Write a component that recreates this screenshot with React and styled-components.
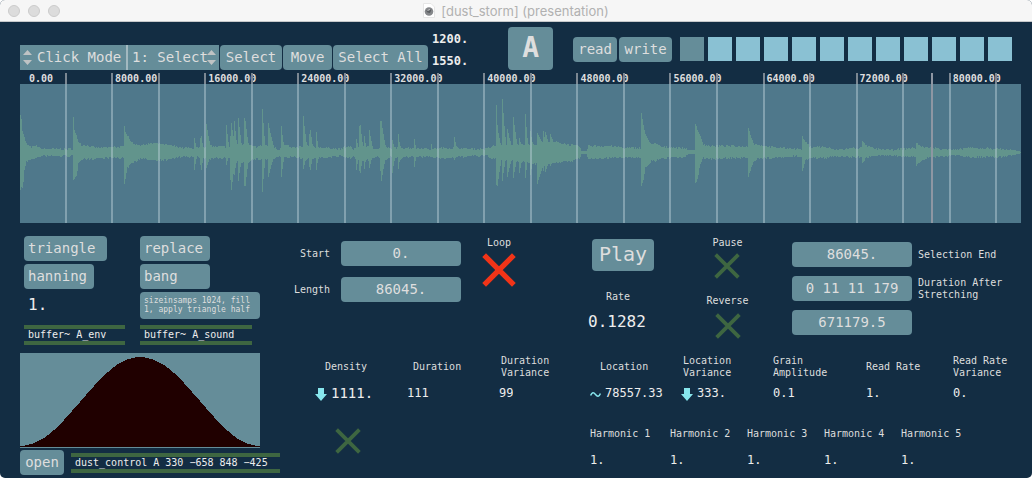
import React from "react";
import styled, { createGlobalStyle } from "styled-components";

const c = {
  bg: "#132d43",
  button: "#658d99",
  pane: "#4f788b",
  wave: "#62948c",
  slot: "#8ac1d3",
  text: "#dedede",
  bright: "#eeeeee",
  green: "#3e6641",
  red: "#f13418",
  cyan: "#87e6ed",
  curve: "#200000",
};
const mono = '"DejaVu Sans Mono", "Liberation Mono", monospace';

const Global = createGlobalStyle`
  * { box-sizing: border-box; }
  body { margin: 0; background: #ffffff; }
  button, input, select { margin: 0; padding: 0; border: 0; font-family: ${mono}; }
  svg { display: block; }
`;

const Window = styled.div`
  display: flex;
  flex-direction: column;
  min-height: 100vh;
  border-radius: 5px;
  overflow: hidden;
  background: ${c.bg};
  color: ${c.text};
  font: 10px/12px ${mono};
`;

const TitleBar = styled.header`
  position: relative;
  display: flex;
  align-items: center;
  justify-content: center;
  gap: 6px;
  height: 22px;
  background: #f6f6f6;
  border-bottom: 1px solid #c6c8ca;
  color: #b1b1b1;
  font: 13px/20px Inter, "Liberation Sans", sans-serif;
`;
const Title = styled.h1`
  margin: 0;
  font: inherit;
`;
const Lights = styled.div`
  position: absolute;
  left: 8px;
  top: 5px;
  display: flex;
  gap: 8px;
`;
const Light = styled.button`
  width: 12px;
  height: 12px;
  border-radius: 50%;
  background: #dcdcdc;
  border: 1px solid #cbcbcb;
`;

const Toolbar = styled.div`
  display: flex;
  align-items: flex-end;
  height: 51px;
  padding: 0 20px 3px;
`;
const Tools = styled.div`
  display: flex;
  gap: 1px;
`;
const MenuPair = styled.div`
  display: flex;
`;
const MenuBox = styled.div`
  position: relative;
  display: flex;
  background: ${c.button};
  border-left: ${(p) => (p.$divided ? "2px solid #a3b9c0" : "0")};
`;
const Menu = styled.select`
  appearance: none;
  width: ${(p) => p.$w}px;
  height: 25px;
  padding-left: ${(p) => p.$pad}px;
  padding-bottom: 2px;
  background: transparent;
  color: ${c.text};
  font-size: 14px;
`;
const MenuArrows = styled.svg`
  position: absolute;
  top: 5px;
  ${(p) => p.$side}: 3px;
  pointer-events: none;
`;

const Button = styled.button`
  width: ${(p) => (p.$w ? `${p.$w}px` : "auto")};
  height: ${(p) => p.$h || 25}px;
  padding: 0 4px 2px;
  border-radius: 4px;
  background: ${c.button};
  color: ${c.text};
  font-size: ${(p) => p.$size || 14}px;
  font-weight: ${(p) => (p.$bold ? "bold" : "normal")};
  line-height: ${(p) => p.$line || 20}px;
  text-align: ${(p) => p.$align || "center"};
  white-space: ${(p) => (p.$wrap ? "pre-line" : "nowrap")};
`;

const Pair = styled.div`
  display: flex;
  flex-direction: column;
  gap: 6px;
  margin: 0 40px 0 4px;
`;
const NumberBox = styled.input`
  width: ${(p) => p.$ch}ch;
  height: ${(p) => p.$h || 16}px;
  padding-bottom: 2px;
  background: transparent;
  color: ${c.bright};
  font-size: ${(p) => p.$size || 12}px;
  font-weight: ${(p) => (p.$bold ? "bold" : "normal")};
`;
const FileTools = styled.div`
  display: flex;
  align-items: flex-start;
  gap: 2px;
  margin: 0 8px 8px 20px;
`;
const Slots = styled.div`
  flex: 1;
  display: grid;
  grid-template-columns: repeat(12, 1fr);
  gap: 4px;
  margin-bottom: 9px;
`;
const Slot = styled.button`
  height: 24px;
  background: ${(p) => (p.$current ? c.button : c.slot)};
`;

const WaveView = styled.section`
  position: relative;
  margin: 0 11px 0 20px;
`;
const Ruler = styled.div`
  display: grid;
  grid-template-columns: repeat(10, 8000fr) 6045fr;
  height: 11px;
  font-weight: bold;
  line-height: 11px;
`;
const RulerLabel = styled.span`
  min-width: 0;
  padding-left: ${(p) => (p.$first ? 9 : 2)}px;
`;
const Ticks = styled.div`
  position: absolute;
  inset: 0;
  display: grid;
  grid-template-columns: repeat(21, 4000fr) 2045fr;
  pointer-events: none;
`;
const Tick = styled.i`
  background: linear-gradient(#7b8792 0 11px, rgba(190, 210, 218, 0.45) 11px) right 0 / 2px 100% no-repeat;
`;
const Playhead = styled.i`
  position: absolute;
  top: 0;
  bottom: 0;
  left: 91%;
  width: 2px;
  background: #8e97a3;
`;
const WavePane = styled.svg`
  width: 100%;
  height: 139px;
  background: ${c.pane};
`;

const Panels = styled.div`
  display: flex;
  flex: 1;
`;
const SidePanel = styled.section`
  width: 290px;
  padding: 13px 0 3px 20px;
`;
const SideGrid = styled.div`
  display: grid;
  grid-template-columns: 116px 120px;
  justify-items: start;
  align-items: center;
  gap: 3px 0;
  padding-left: 4px;
`;
const ObjectBox = styled.div`
  width: ${(p) => p.$w}px;
  height: 20px;
  padding-left: 4px;
  border: solid ${c.green};
  border-width: 4px 0;
  color: ${c.bright};
  line-height: 12px;
  white-space: nowrap;
`;
const ObjectRow = styled(SideGrid)`
  margin-top: 6px;
`;
const Envelope = styled.svg`
  margin: 8px 0 2px;
  background: ${c.button};
`;
const OpenRow = styled.div`
  display: flex;
  align-items: center;
  gap: 7px;
`;

const Main = styled.div`
  flex: 1;
  min-width: 0;
`;
const Upper = styled.div`
  display: grid;
  grid-template-columns: 171fr 76fr 127fr 127fr 241fr;
`;
const Column = styled.section`
  display: flex;
  flex-direction: column;
  align-items: ${(p) => p.$align || "flex-start"};
  padding-top: ${(p) => p.$top}px;
  padding-left: ${(p) => p.$left || 0}px;
  gap: ${(p) => p.$gap || 0}px;
`;
const FieldRow = styled.div`
  display: flex;
  align-items: center;
  gap: ${(p) => p.$gap}px;
  height: 25px;
`;
const Field = styled.input`
  width: 120px;
  height: 25px;
  padding-bottom: 2px;
  border-radius: 4px;
  background: ${c.button};
  color: ${c.text};
  font-size: 14px;
  text-align: center;
`;
const Label = styled.label`
  padding-left: ${(p) => p.$indent || 0}px;
  white-space: pre-line;
`;
const Indent = styled.div`
  padding-left: 4px;
`;
const Stack = styled.div`
  display: flex;
  flex-direction: column;
  align-items: ${(p) => p.$align || "center"};
  gap: ${(p) => p.$gap || 4}px;
`;

const ToggleBox = styled.span`
  position: relative;
  display: block;
  width: ${(p) => p.$size}px;
  height: ${(p) => p.$size}px;
`;
const ToggleInput = styled.input`
  position: absolute;
  inset: 0;
  width: 100%;
  height: 100%;
  opacity: 0;
`;

const Params = styled.section`
  display: grid;
  grid-template-columns: 92fr 92fr 91fr 91fr 92fr 93fr 87fr 79fr;
  margin: 16px 0 0 25px;
`;
const Param = styled.div`
  display: flex;
  flex-direction: column;
  gap: 7px;
`;
const ParamHead = styled.div`
  display: flex;
  align-items: center;
  height: 24px;
`;
const ParamValue = styled.div`
  display: flex;
  align-items: center;
  gap: 4px;
  height: 16px;
`;
const DensityToggle = styled.div`
  padding: 26px 0 0 20px;
`;
const Harmonics = styled.div`
  grid-column: 4 / -1;
  display: grid;
  grid-template-columns: 80fr 77fr 77fr 77fr 131fr;
  padding-top: 26px;
`;

function Arrows({ side }) {
  return (
    <MenuArrows $side={side} width="9" height="15" viewBox="0 0 9 15" fill="#bfc3c4" aria-hidden="true">
      <path d="M0 5 4.500 0 9 5ZM0 10H9L4.500 15Z" />
    </MenuArrows>
  );
}

function Toggle({ id, size, on, label }) {
  return (
    <ToggleBox $size={size}>
      <svg width={size} height={size} viewBox="0 0 32 32" aria-hidden="true">
        <path d="M2 2 30 30M30 2 2 30" stroke={on ? c.red : c.green} strokeWidth={on ? 5 : 4.6} />
      </svg>
      <ToggleInput type="checkbox" id={id} defaultChecked={on} aria-label={label} />
    </ToggleBox>
  );
}

const DownArrow = () => (
  <svg width="12" height="13" viewBox="0 0 12 13" fill={c.cyan} aria-hidden="true">
    <path d="M3 0H9V6H12L6 13 0 6H3Z" />
  </svg>
);
const Tilde = () => (
  <svg width="11" height="7" viewBox="0 0 11 7" fill="none" stroke={c.cyan} strokeWidth="1.500" aria-hidden="true">
    <path d="M.6 4.600C2 1 3.600 1 5.500 3.500S9 6 10.400 2.400" />
  </svg>
);

/* Envelope of the recorded sound: [x, height above centre, depth below]. */
const envelope = [
  [0, 38, 36], [1, 33, 35], [2, 21, 35], [3, 18, 28], [4, 14, 17], [6, 8, 9], [10, 5, 6], [16, 6, 5], [22, 3, 3], [52, 3, 3],
  [53, 35, 28], [54, 22, 26], [56, 16, 24], [58, 11, 10], [61, 7, 6], [66, 7, 6], [72, 5, 6], [80, 4, 5], [94, 5, 5], [103, 5, 5],
  [104, 26, 30], [105, 21, 27], [107, 17, 15], [110, 12, 11], [113, 8, 9], [120, 7, 6], [134, 9, 7], [146, 7, 7], [154, 6, 5], [162, 4, 4],
  [174, 4, 4], [184, 4, 5], [190, 6, 6], [198, 6, 5], [206, 5, 5], [216, 7, 9], [226, 8, 10], [234, 5, 6], [244, 7, 6], [252, 6, 6],
  [258, 2, 4], [265, 8, 5], [271, 4, 4], [286, 6, 6], [296, 5, 5], [310, 4, 4], [316, 3, 3], [322, 3, 3], [324, 5, 5], [330, 5, 5],
  [333, 3, 3], [338, 6, 8], [350, 5, 7], [358, 3, 3], [362, 6, 8], [370, 3, 4], [380, 5, 6], [384, 4, 4], [394, 4, 4], [410, 3, 4],
  [421, 4, 5], [430, 4, 5], [440, 4, 4], [452, 3, 3], [466, 3, 3], [473, 6, 6], [490, 6, 7], [506, 8, 9], [517, 8, 11], [524, 10, 12],
  [536, 10, 9], [550, 7, 8], [559, 6, 6], [561, 1, 1], [566, 1, 1], [568, 6, 6], [590, 6, 5], [605, 4, 4], [620, 4, 5],
  [621, 39, 34], [623, 27, 27], [625, 17, 15], [628, 12, 11], [631, 8, 8], [635, 8, 8], [642, 5, 5], [664, 4, 4], [668, 2, 1], [674, 2, 1],
  [675, 29, 30], [677, 21, 27], [680, 16, 10], [683, 8, 5], [688, 6, 6], [710, 6, 5], [727, 5, 5], [728, 25, 24], [731, 14, 15],
  [734, 8, 7], [740, 7, 5], [750, 5, 5], [768, 4, 4], [775, 3, 3], [781, 3, 4], [782, 15, 17], [785, 10, 7], [790, 5, 5], [805, 5, 5],
  [815, 2, 3], [833, 4, 4], [841, 4, 4], [842, 11, 10], [846, 6, 4], [855, 3, 3], [870, 2, 2], [880, 3, 3], [895, 4, 4], [896, 9, 13],
  [901, 5, 7], [912, 4, 4], [925, 3, 3], [938, 2, 2], [945, 4, 4], [960, 4, 4], [980, 3, 4], [992, 2, 2], [998, 1, 1], [1001, 0, 0],
];

/* Single grains standing out of the body: [x, height, depth, decay]. */
const grains = [
  [174, 14, 17, 4], [180, 14, 12, 3], [181, 16, 17, 3], [186, 28, 15, 6], [206, 27, 12, 4], [210, 16, 27, 2], [211, 29, 37, 6], [214, 31, 22, 4],
  [218, 34, 28, 5], [224, 34, 33, 3], [225, 31, 33, 5], [242, 43, 39, 4], [248, 29, 24, 8], [261, 26, 24, 4], [283, 36, 16, 5], [289, 18, 14, 3],
  [290, 22, 17, 4], [296, 20, 17, 3], [336, 13, 17, 4], [339, 26, 18, 3], [340, 27, 20, 4], [344, 16, 16, 3], [349, 22, 15, 5], [360, 31, 18, 2],
  [361, 31, 28, 6], [372, 12, 20, 4], [378, 18, 16, 3], [394, 13, 14, 3], [411, 8, 4, 2], [434, 15, 7, 4], [476, 47, 32, 3], [477, 25, 33, 6],
  [482, 53, 28, 5], [487, 23, 24, 7], [493, 35, 25, 6], [499, 14, 20, 5], [505, 38, 25, 4], [510, 21, 22, 5], [517, 19, 31, 12], [523, 21, 18, 5],
  [525, 20, 19, 8], [530, 18, 13, 9],
];

function samplePath() {
  const top = [];
  const bottom = [];
  const mid = 68;
  let i = 0;
  let seed = 7;
  const noise = () => {
    seed = (seed * 16807) % 2147483647;
    return seed / 2147483647;
  };
  for (let x = 0; x <= 1000; x += 1) {
    while (i < envelope.length - 2 && envelope[i + 1][0] <= x) i += 1;
    const [x0, u0, d0] = envelope[i];
    const [x1, u1, d1] = envelope[i + 1];
    const onset = u1 - u0 > 4 && x1 - x0 === 1;
    const t = onset ? 0 : (x - x0) / (x1 - x0);
    let up = u0 + (u1 - u0) * t;
    let down = d0 + (d1 - d0) * t;
    if (up > 2 && x < 992) {
      up += noise() * 2 - 1;
      down += noise() * 2 - 1;
    }
    grains.forEach(([gx, gu, gd, w]) => {
      if (x >= gx && x < gx + w) {
        const k = Math.pow(1 - (x - gx) / w, 1.400);
        up = Math.max(up, gu * k);
        down = Math.max(down, gd * k);
      }
    });
    const a = mid - Math.round(up);
    const b = mid + 1 + Math.round(down);
    top.push(`${x} ${a} ${x + 1} ${a}`);
    bottom.unshift(`${x + 1} ${b} ${x} ${b}`);
  }
  return `M${top.join(" ")} ${bottom.join(" ")}Z`;
}
const wavePath = samplePath();

const hanning = Array.from({ length: 121 }, (_, k) => {
  const y = 93 - Math.round(89 * (0.5 - 0.5 * Math.cos((2 * Math.PI * k) / 120)));
  return `${k * 2} ${y}`;
}).join(" ");

const params = [
  { id: "density", label: "Density", value: "1111.", indent: 10, size: 14, icon: <DownArrow /> },
  { id: "duration", label: "Duration", value: "111", indent: 6 },
  { id: "duration-variance", label: "Duration\nVariance", value: "99", indent: 2 },
  { id: "location", label: "Location", value: "78557.33", indent: 10, icon: <Tilde /> },
  { id: "location-variance", label: "Location\nVariance", value: "333.", indent: 2, icon: <DownArrow /> },
  { id: "amplitude", label: "Grain\nAmplitude", value: "0.1" },
  { id: "read-rate", label: "Read Rate", value: "1." },
  { id: "read-rate-variance", label: "Read Rate\nVariance", value: "0." },
];

export default function App() {
  return (
    <Window>
      <Global />
      <TitleBar>
        <Lights>
          <Light aria-label="Close" />
          <Light aria-label="Minimize" />
          <Light aria-label="Zoom" />
        </Lights>
        <svg width="12" height="15" viewBox="0 0 12 15" aria-hidden="true">
          <path d="M.5.5H8L11.500 4V14.500H.5Z" fill="#fff" stroke="#e6e6e6" />
          <circle cx="6" cy="8.500" r="4.300" fill="#85878a" />
          <path d="M3 7.500 8.500 6.500 7 10 4.500 9.500Z" fill="#5b5e62" />
          <path d="M4.500 7.500 7 6.500" stroke="#c8c8c8" />
        </svg>
        <Title>[dust_storm] (presentation)</Title>
      </TitleBar>

      <Toolbar>
        <Tools>
          <MenuPair>
            <MenuBox>
              <Arrows side="left" />
              <Menu $w={106} $pad={17} aria-label="Mode">
                <option>Click Mode</option>
              </Menu>
            </MenuBox>
            <MenuBox $divided>
              <Menu $w={91} $pad={4} aria-label="Click mode">
                <option>1: Select</option>
              </Menu>
              <Arrows side="right" />
            </MenuBox>
          </MenuPair>
          <Button $w={62}>Select</Button>
          <Button $w={49}>Move</Button>
          <Button $w={95}>Select All</Button>
        </Tools>
        <Pair>
          <NumberBox $ch={5} $bold defaultValue="1200." aria-label="View start" />
          <NumberBox $ch={5} $bold defaultValue="1550." aria-label="View end" />
        </Pair>
        <Button $w={45} $h={43} $size={28} $line={40} $bold>A</Button>
        <FileTools>
          <Button $w={44}>read</Button>
          <Button $w={53}>write</Button>
        </FileTools>
        <Slots>
          {Array.from({ length: 12 }, (_, k) => (
            <Slot key={k} $current={k === 0} aria-label={`Preset ${k + 1}`} />
          ))}
        </Slots>
      </Toolbar>

      <WaveView>
        <Ruler>
          {Array.from({ length: 11 }, (_, k) => (
            <RulerLabel key={k} $first={k === 0}>{(k * 8000).toFixed(2)}</RulerLabel>
          ))}
        </Ruler>
        <WavePane viewBox="0 0 1001 139" preserveAspectRatio="none" shapeRendering="crispEdges" aria-hidden="true">
          <path d={wavePath} fill={c.wave} />
        </WavePane>
        <Ticks>
          {Array.from({ length: 21 }, (_, k) => (
            <Tick key={k} />
          ))}
        </Ticks>
        <Playhead />
      </WaveView>

      <Panels>
        <SidePanel>
          <SideGrid>
            <Button $w={83} $align="left">triangle</Button>
            <Button $w={70} $align="left">replace</Button>
            <Button $w={70} $align="left">hanning</Button>
            <Button $w={70} $align="left">bang</Button>
            <Indent>
              <NumberBox $ch={3} $size={16} $h={20} defaultValue="1." aria-label="Envelope amount" />
            </Indent>
            <Button $w={120} $h={27} $size={8} $line={9} $align="left" $wrap>
              {"sizeinsamps 1024, fill\n1, apply triangle half"}
            </Button>
          </SideGrid>
          <ObjectRow>
            <ObjectBox $w={101}>buffer~ A_env</ObjectBox>
            <ObjectBox $w={112}>buffer~ A_sound</ObjectBox>
          </ObjectRow>
          <Envelope width="240" height="95" viewBox="0 0 240 95" shapeRendering="crispEdges" aria-hidden="true">
            <path d={`M0 94 ${hanning} 240 94Z`} fill={c.curve} />
          </Envelope>
          <OpenRow>
            <Button $w={44}>open</Button>
            <ObjectBox $w={209}>dust_control A 330 −658 848 −425</ObjectBox>
          </OpenRow>
        </SidePanel>

        <Main>
          <Upper>
            <Column $top={18} $gap={11} $align="flex-end">
              <FieldRow $gap={11}>
                <Label htmlFor="start">Start</Label>
                <Field id="start" defaultValue="0." />
              </FieldRow>
              <FieldRow $gap={11}>
                <Label htmlFor="length">Length</Label>
                <Field id="length" defaultValue="86045." />
              </FieldRow>
            </Column>
            <Column $top={14} $align="center">
              <Stack>
                <Label htmlFor="loop">Loop</Label>
                <Toggle id="loop" size={34} on />
              </Stack>
            </Column>
            <Column $top={16} $left={51} $gap={20}>
              <Indent>
                <Button $w={62} $h={32} $size={20}>Play</Button>
              </Indent>
              <Stack $align="flex-start" $gap={9}>
                <Label htmlFor="rate" $indent={18}>Rate</Label>
                <NumberBox id="rate" $ch={6} $size={16} $h={20} defaultValue="0.1282" />
              </Stack>
            </Column>
            <Column $top={14} $gap={16} $align="center">
              <Stack>
                <Label htmlFor="pause">Pause</Label>
                <Toggle id="pause" size={26} />
              </Stack>
              <Stack $gap={6}>
                <Label htmlFor="reverse">Reverse</Label>
                <Toggle id="reverse" size={26} />
              </Stack>
            </Column>
            <Column $top={19} $left={1} $gap={9}>
              <FieldRow $gap={6}>
                <Field id="selection-end" defaultValue="86045." />
                <Label htmlFor="selection-end">Selection End</Label>
              </FieldRow>
              <FieldRow $gap={6}>
                <Field id="stretched" defaultValue="0 11 11 179" />
                <Label htmlFor="stretched">{"Duration After\nStretching"}</Label>
              </FieldRow>
              <Field defaultValue="671179.5" aria-label="Duration in milliseconds" />
            </Column>
          </Upper>

          <Params>
            {params.map((p) => (
              <Param key={p.id}>
                <ParamHead>
                  <Label htmlFor={p.id} $indent={p.indent}>{p.label}</Label>
                </ParamHead>
                <ParamValue>
                  {p.icon}
                  <NumberBox id={p.id} $ch={p.value.length} $size={p.size} defaultValue={p.value} />
                </ParamValue>
              </Param>
            ))}
            <DensityToggle>
              <Toggle size={26} label="Density modulation" />
            </DensityToggle>
            <Harmonics>
              {[1, 2, 3, 4, 5].map((n) => (
                <Stack key={n} $align="flex-start" $gap={13}>
                  <Label htmlFor={`harmonic-${n}`}>{`Harmonic ${n}`}</Label>
                  <NumberBox id={`harmonic-${n}`} $ch={3} defaultValue="1." />
                </Stack>
              ))}
            </Harmonics>
          </Params>
        </Main>
      </Panels>
    </Window>
  );
}
